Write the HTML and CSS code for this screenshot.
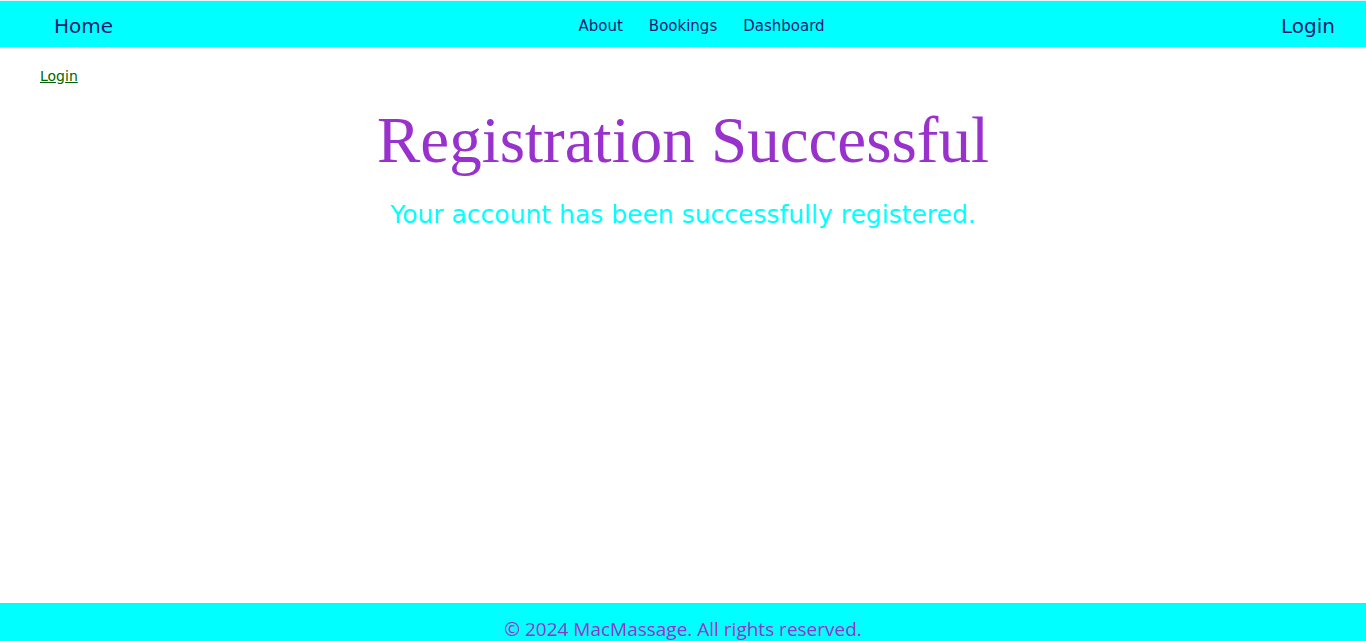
FILE: index.html
```html
<!DOCTYPE html>
<html lang="en">
<head>
<meta charset="utf-8">
<title>Registration Successful</title>
<link rel="stylesheet" href="styles.css">
</head>
<body>
<header class="navbar">
  <a class="brand" href="#">Home</a>
  <nav class="nav-links">
    <a href="#">About</a>
    <a href="#">Bookings</a>
    <a href="#">Dashboard</a>
  </nav>
  <a class="nav-login" href="#">Login</a>
</header>
<main class="content">
  <a class="back-login" href="#">Login</a>
  <h1 class="title">Registration Successful</h1>
  <p class="subtitle">Your account has been successfully registered.</p>
</main>
<footer class="footer">
  <p>© 2024 MacMassage. All rights reserved.</p>
</footer>
</body>
</html>
```

FILE: styles.css
```css
html, body {
  margin: 0;
  padding: 0;
  height: 100%;
}
body {
  display: flex;
  flex-direction: column;
  font-family: "DejaVu Sans", Verdana, sans-serif;
  background: #ffffff;
  border-top: 1px solid #e8f4f4;
  box-sizing: border-box;
}
.navbar {
  display: flex;
  align-items: center;
  justify-content: space-between;
  background: #00ffff;
  height: 46px;
  padding: 3px 31px 0 54px;
  box-sizing: border-box;
}
.navbar a {
  color: #191970;
  text-decoration: none;
}
.brand, .nav-login {
  font-size: 20px;
}
.nav-links {
  display: flex;
  gap: 26px;
  font-size: 15px;
  margin-left: 9px;
}
.content {
  flex: 1;
  padding: 21px 40px 0;
  text-align: center;
}
.back-login {
  display: block;
  text-align: left;
  color: #006400;
  font-size: 14px;
  width: max-content;
}
.title {
  font-family: Georgia, "Liberation Serif", serif;
  font-weight: normal;
  color: #9932cc;
  font-size: 65px;
  margin: 17px 0 0;
  line-height: 1.2;
}
.subtitle {
  color: #00ffff;
  font-size: 25px;
  margin: 21px 0 0;
}
.footer {
  background: #00ffff;
  height: 38px;
  text-align: center;
}
.footer p {
  margin: 0;
  padding-top: 13px;
  font-family: "Open Sans", sans-serif;
  font-size: 19px;
  color: #9932cc;
}
```
